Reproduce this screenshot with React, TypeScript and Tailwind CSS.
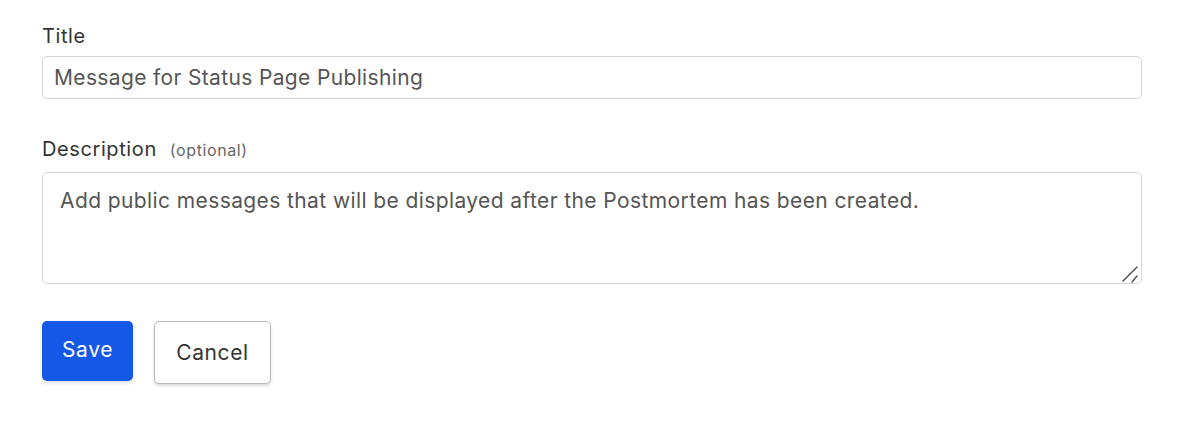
import React from 'react';

export default function App() {
  return (
    <div
      className="min-h-screen w-full bg-white text-[#333]"
      style={{ fontFamily: 'Inter, "Liberation Sans", sans-serif' }}
    >
      <form className="flex flex-col pl-[42px] pr-[52px] pt-[24px]">
        {/* Title */}
        <label className="text-[20px] leading-[24px] tracking-[0.6px] text-[#333]">Title</label>
        <input
          type="text"
          defaultValue="Message for Status Page Publishing"
          className="mt-[8px] h-[43px] w-full rounded-[5px] border border-[#d4d4d4] px-[11px] text-[21px] tracking-[0.35px] text-[#555] outline-none"
        />

        {/* Description */}
        <div className="mt-[38px] flex items-baseline gap-[13px]">
          <label className="text-[20px] leading-[24px] tracking-[0.6px] text-[#333]">Description</label>
          <span className="text-[16px] tracking-[0.6px] text-[#666]">(optional)</span>
        </div>
        <div className="relative mt-[10px]">
          <textarea
            defaultValue="Add public messages that will be displayed after the Postmortem has been created."
            className="block h-[112px] w-full resize-none rounded-[5px] border border-[#d4d4d4] px-[17px] py-[15px] text-[21px] leading-[26px] tracking-[0.4px] text-[#555] outline-none"
          />
          {/* resize grip */}
          <svg
            className="pointer-events-none absolute bottom-[1px] right-[2px]"
            width="18"
            height="18"
            viewBox="0 0 18 18"
          >
            <path d="M1 16 L15 2" stroke="#555" strokeWidth="1.5" strokeLinecap="round" />
            <path d="M10 17 L15 11" stroke="#555" strokeWidth="1.5" strokeLinecap="round" />
          </svg>
        </div>

        {/* Actions */}
        <div className="mt-[37px] flex items-start gap-[21px]">
          <button
            type="button"
            className="h-[60px] w-[91px] rounded-[5px] bg-[#1557e6] pb-[3px] text-[21px] tracking-[0.6px] text-white shadow-[0_2px_4px_rgba(0,0,0,0.12)]"
          >
            Save
          </button>
          <button
            type="button"
            className="h-[63px] w-[117px] rounded-[5px] border border-[#b8b8b8] bg-white text-[21px] tracking-[0.6px] text-[#333] shadow-[0_2px_3px_rgba(0,0,0,0.15)]"
          >
            Cancel
          </button>
        </div>
      </form>
    </div>
  );
}
